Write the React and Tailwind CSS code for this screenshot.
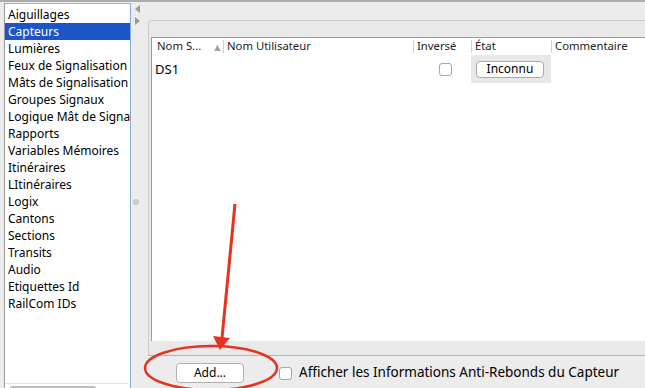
import React from "react";

// Liste des types de tables (panneau gauche)
const items = [
  "Aiguillages",
  "Capteurs",
  "Lumières",
  "Feux de Signalisation",
  "Mâts de Signalisation",
  "Groupes Signaux",
  "Logique Mât de Signalisation",
  "Rapports",
  "Variables Mémoires",
  "Itinéraires",
  "LItinéraires",
  "Logix",
  "Cantons",
  "Sections",
  "Transits",
  "Audio",
  "Etiquettes Id",
  "RailCom IDs",
];

const HeaderCell = ({ className = "", children, sep = true }) => (
  <div className={`relative h-full flex items-center pl-[4px] ${className}`}>
    {sep && <span className="absolute left-0 top-[2px] bottom-[2px] w-px bg-[#d0d0d0]" />}
    {children}
  </div>
);

const App = () => {
  return (
    <div
      className="relative w-[645px] h-[388px] overflow-hidden bg-[#ececec] border-t-2 border-[#acacac] flex text-[13px] text-black"
      style={{ fontFamily: '"Noto Sans", "DejaVu Sans", sans-serif' }}
    >
      {/* Liste de gauche */}
      <div className="w-[131px] pl-[4px] pt-px shrink-0 h-full">
        <div className="relative h-full bg-white border-l border-l-[#9a9a9a] border-t border-r border-t-[#93b6de] border-r-[#86acd9] pt-[2px] overflow-hidden text-[12px]">
          {items.map((it, i) => (
            <div
              key={it}
              className={`h-[17px] leading-[17px] pl-[3px] whitespace-nowrap ${i === 1 ? "bg-[#1d55c8] text-white" : ""}`}
            >
              {it}
            </div>
          ))}
          <div className="absolute left-0 right-[2px] bottom-[4px] h-px bg-[#e2e2e2]" />
          <div className="absolute left-[5px] w-[86px] bottom-0 h-[2px] bg-[#bdbdbd] rounded-t" />
        </div>
      </div>

      {/* Séparateur */}
      <div className="relative w-[17px] shrink-0 h-full">
        <div className="absolute left-[4px] top-[3px] w-0 h-0 border-y-[4px] border-y-transparent border-r-[5px] border-r-[#9a9a9a]" />
        <div className="absolute left-[4px] top-[15px] w-0 h-0 border-y-[4px] border-y-transparent border-l-[5px] border-l-[#9a9a9a]" />
        <div className="absolute left-[2px] top-[197px] w-[6px] h-[6px] rounded-full bg-[#cfcfcf] border border-[#bdbdbd]" />
      </div>

      {/* Panneau de droite */}
      <div className="flex-1 flex flex-col min-w-0 pt-[18px]">
        <div className="flex-1 flex flex-col bg-[#e9e9e9] border-t border-l border-[#cdcdcd] rounded-tl-[4px] pt-[16px] pl-[2px] pb-[14px] min-h-0">
          {/* Table */}
          <div className="flex-1 bg-white border-t border-l border-[#9c9c9c] flex flex-col">
            <div className="h-[17px] flex text-[11.3px] text-[#222] bg-white">
              <HeaderCell className="w-[71px]" sep={false}>
                <span className="pl-[1px]">Nom S...</span>
                <span className="ml-[13px] text-[8px] text-[#a0a0a0]">▲</span>
              </HeaderCell>
              <HeaderCell className="w-[190px]">Nom Utilisateur</HeaderCell>
              <HeaderCell className="w-[58px]">Inversé</HeaderCell>
              <HeaderCell className="w-[80px]">État</HeaderCell>
              <HeaderCell className="flex-1">Commentaire</HeaderCell>
            </div>
            <div className="h-[28px] flex items-stretch">
              <div className="w-[71px] flex items-center pl-[3px] pt-[2px]">DS1</div>
              <div className="w-[190px]" />
              <div className="w-[58px] flex items-center justify-center pl-[6px]">
                <div className="w-[13px] h-[13px] rounded-[3px] border border-[#a6a6a6] bg-white" />
              </div>
              <div className="w-[80px] bg-[#e8e8e8] flex items-center pl-[5px]">
                <div className="w-[68px] h-[17px] rounded-[4px] border border-[#a8a8a8] bg-white flex items-center justify-center text-[12px]">
                  Inconnu
                </div>
              </div>
              <div className="flex-1" />
            </div>
          </div>
        </div>

        {/* Barre du bas */}
        <div className="h-[33px] shrink-0 flex items-center border-t border-[#b5b5b5] bg-[#ececec]">
          <div className="ml-[28px] mt-[2px] w-[68px] h-[20px] rounded-[4px] border border-[#b0b0b0] bg-white flex items-center justify-center text-[12px]">
            Add...
          </div>
          <div className="ml-[35px] mt-[2px] w-[13px] h-[13px] rounded-[3px] border border-[#a6a6a6] bg-white" />
          <span className="ml-[7px] mt-[1px] whitespace-nowrap text-[13.5px]">
            Afficher les Informations Anti-Rebonds du Capteur
          </span>
        </div>
      </div>

      {/* Annotation rouge */}
      <svg className="absolute left-0 top-0 pointer-events-none" width="645" height="388">
        <ellipse cx="211" cy="366" rx="66" ry="22" fill="none" stroke="#e8321f" strokeWidth="2.5" />
        <line x1="235" y1="202" x2="222" y2="336" stroke="#e8321f" strokeWidth="3" />
        <polygon points="213,334 230,336 220,348" fill="#e8321f" />
      </svg>
    </div>
  );
};

export default App;
